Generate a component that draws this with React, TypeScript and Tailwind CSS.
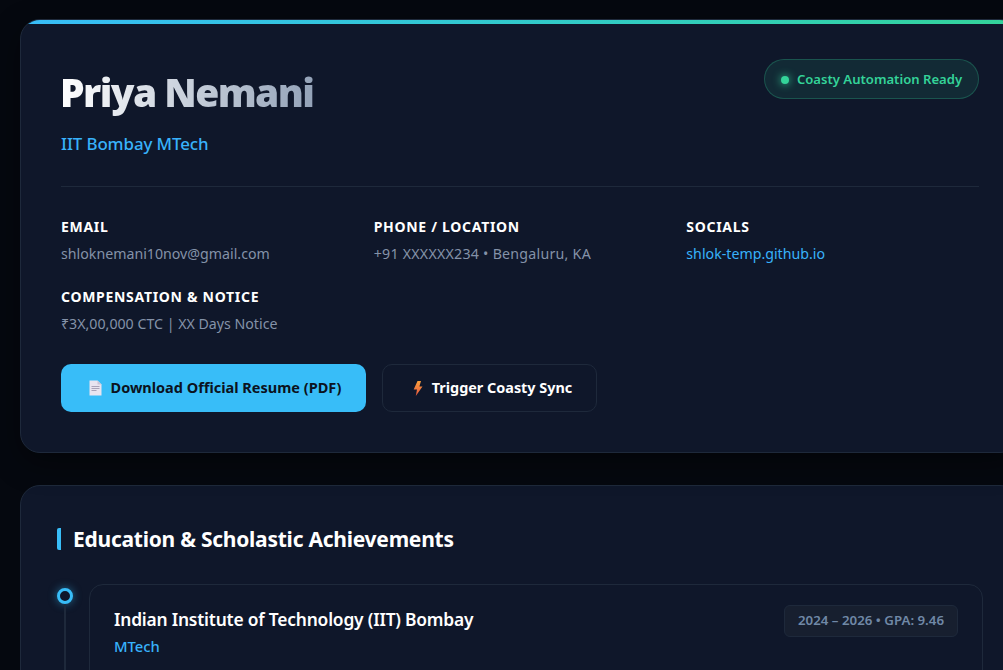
import React from "react";

const font = { fontFamily: '"Noto Sans", "Open Sans", sans-serif' };

function Info({ label, children }: { label: string; children: React.ReactNode }) {
  return (
    <div className="flex flex-col gap-[8px]">
      <div className="text-[14px] leading-[18px] font-bold tracking-[0.7px] text-white">{label}</div>
      <div className="text-[14.2px] leading-[20px] text-[#8492a8]">{children}</div>
    </div>
  );
}

function Doc() {
  return (
    <span className="flex w-[19px] shrink-0 justify-center">
      <svg width="13" height="16" viewBox="0 0 13 16">
        <path d="M0.5 0.5H8.5L12.5 4.5V15.5H0.5Z" fill="#e8e4f0" />
        <path d="M8.5 0.5V4.5H12.5Z" fill="#c9c3d6" />
        <path d="M2.5 6.5H10.5M2.5 8.5H10.5M2.5 10.5H7.5" stroke="#a8a2b8" strokeWidth="1" />
      </svg>
    </span>
  );
}

function Bolt() {
  return (
    <span className="flex w-[19px] shrink-0 justify-center pl-[3px]">
      <svg width="10" height="15" viewBox="0 0 10 15">
        <defs>
          <linearGradient id="b" x1="0" y1="0" x2="0" y2="1">
            <stop offset="0" stopColor="#f9a13c" />
            <stop offset="1" stopColor="#e8553f" />
          </linearGradient>
        </defs>
        <path d="M4.5 0H8L6.4 5.5H9.5L2.8 15L4 8.5H0.7Z" fill="url(#b)" />
      </svg>
    </span>
  );
}

export default function App() {
  return (
    <div className="h-screen overflow-hidden bg-[#05080f] pt-[19px] pl-[20px]" style={font}>
      <div className="flex w-[1000px] flex-col gap-[32px]">
        <section className="relative h-[434px] shrink-0 overflow-hidden rounded-[20px] border border-[#1e293b] bg-[#0f172a] px-[40px] pt-[39px] shadow-[0_10px_30px_rgba(0,0,0,0.4)]">
          <div className="absolute inset-x-0 top-0 h-[4px] bg-gradient-to-r from-[#38bdf8] to-[#34d399]" />
          <div className="flex items-start justify-between border-b border-[#1e293b] pb-[30px]">
            <div>
              <h1 className="-ml-[1px] bg-gradient-to-r from-white to-[#94a3b8] bg-clip-text pt-[9px] text-[39px] leading-[48px] font-black tracking-[-1.6px] text-transparent">
                Priya Nemani
              </h1>
              <div className="mt-[16px] text-[16.9px] leading-[24px] font-medium tracking-[-0.1px] text-[#38b2fb]">IIT Bombay MTech</div>
            </div>
            <div className="flex h-[40px] w-[215px] items-center justify-center gap-[8px] rounded-full border border-[#34d399]/25 bg-[#34d399]/10 pt-[1px] text-[13.1px] font-semibold text-[#34d399]">
              <span className="h-[8px] w-[8px] rounded-full bg-[#34d399] shadow-[0_0_8px_#34d399]" />
              Coasty Automation Ready
            </div>
          </div>
          <div className="mt-[31px] grid grid-cols-3 gap-x-[20px] gap-y-[24px]">
            <Info label="EMAIL">shloknemani10nov@gmail.com</Info>
            <Info label="PHONE / LOCATION"><span className="tracking-[0.25px]">+91 XXXXXX234 • Bengaluru, KA</span></Info>
            <Info label="SOCIALS"><span className="text-[#38b2fb]">shlok-temp.github.io</span></Info>
            <Info label="COMPENSATION &amp; NOTICE">₹3X,00,000 CTC | XX Days Notice</Info>
          </div>
          <div className="mt-[30px] flex gap-[16px]">
            <button className="flex h-[48px] w-[305px] items-center justify-center gap-[6px] rounded-[10px] bg-[#38bdf8] text-[14.5px] font-bold text-[#0b1220]">
              <Doc /> Download Official Resume (PDF)
            </button>
            <button className="flex h-[48px] w-[215px] items-center justify-center gap-[6px] rounded-[10px] border border-[#1e293b] text-[14.4px] font-bold text-white">
              <Bolt /> Trigger Coasty Sync
            </button>
          </div>
        </section>

        <section className="h-[400px] shrink-0 rounded-[20px] border border-[#1e293b] bg-[#0f172a] pt-[42px] pr-[36px] pl-[36px]">
          <h2 className="rounded-[2px] border-l-4 border-[#38bdf8] pt-[1px] pl-[12px] text-[21px] leading-[21px] font-bold tracking-[-0.25px] text-white">
            Education &amp; Scholastic Achievements
          </h2>
          <div className="mt-[34px] flex gap-[16px]">
            <div className="flex w-[16px] shrink-0 flex-col items-center pt-[4px]">
              <span className="h-[16px] w-[16px] rounded-full border-[3px] border-[#38bdf8] bg-[#0f172a] shadow-[0_0_8px_rgba(56,189,248,0.5)]" />
              <span className="h-[200px] w-[2px] bg-[#1e293b]" />
            </div>
            <div className="flex h-[200px] flex-1 items-start justify-between rounded-[14px] border border-[#1e293b] px-[24px] pt-[20px]">
              <div>
                <div className="-mt-[1px] text-[17.4px] leading-[30px] font-semibold tracking-[-0.2px] text-white">Indian Institute of Technology (IIT) Bombay</div>
                <div className="mt-[1px] text-[14.8px] leading-[22px] font-medium text-[#38b2fb]">MTech</div>
              </div>
              <div className="flex h-[32px] items-center rounded-[6px] border border-[#1e293b] bg-[#171f2f] px-[13px] text-[13.3px] font-semibold text-[#7088a6]">
                2024 – 2026 • GPA: 9.46
              </div>
            </div>
          </div>
        </section>
      </div>
    </div>
  );
}
